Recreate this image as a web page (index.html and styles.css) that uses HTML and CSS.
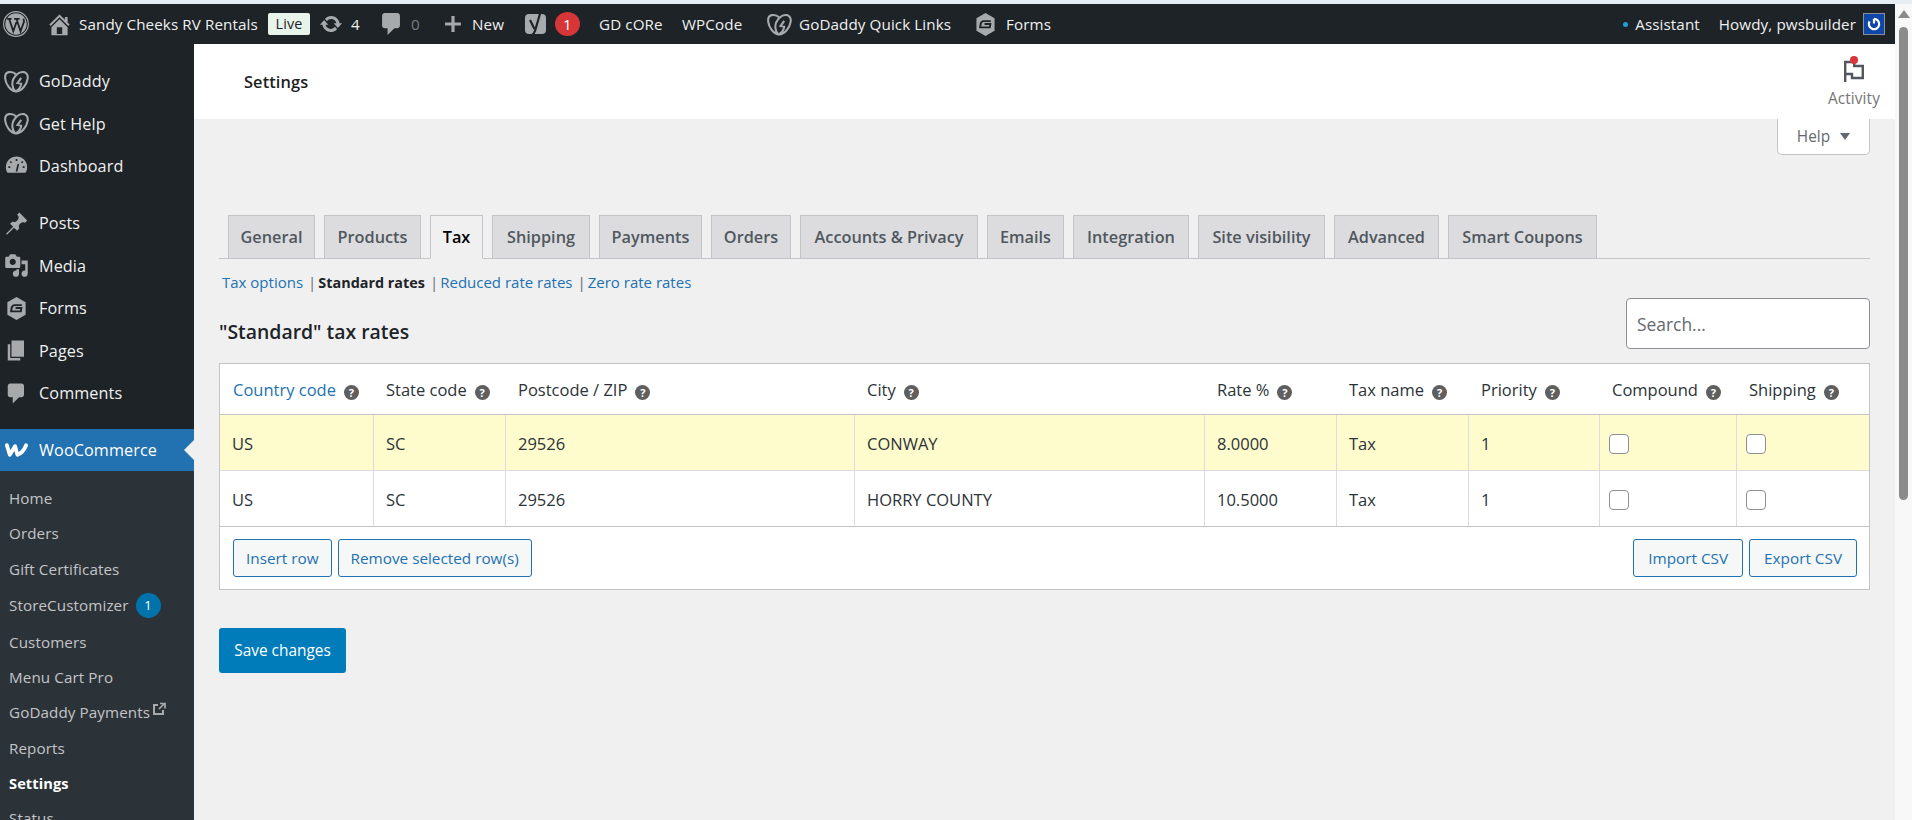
FILE: index.html
```html
<!DOCTYPE html>
<html lang="en">
<head>
<meta charset="utf-8">
<title>Settings</title>
<link rel="stylesheet" href="styles.css">
</head>
<body>
<div class="strip"></div>
<div class="window">
  <div class="app">
    <header class="adminbar">
      <nav class="ab-left">
        <svg class="ic-logo" viewBox="0 0 20 20"><circle cx="10" cy="10" r="9.500" fill="none" stroke="#a7aaad" stroke-width=".9"/><circle cx="10" cy="10" r="8.200" fill="#a7aaad"/><path d="M3.200 6h3.400M4.700 6l3.200 9.600 2.400-7M8.500 6h4.300M10.300 6l3.200 9.600 2.600-7.200c.4-1-.3-1.700-.5-2.400" fill="none" stroke="#1d2327" stroke-width="1.400"/></svg>
        <svg class="ic-home" viewBox="0 0 20 20"><path d="M16 8.500l1.530 1.530-1.060 1.060L10 4.620l-6.470 6.470-1.060-1.060L10 2.500l4 4v-2h2v4zm-6-2.460l6 5.990V18H4v-5.970zM12 17v-5H8v5h4z"/></svg>
        <span class="ab-t">Sandy Cheeks RV Rentals</span>
        <span class="live">Live</span>
        <svg class="ic-sync" viewBox="0 0 20 20"><path d="M10.200 3.280c3.530 0 6.430 2.610 6.920 6h2.080l-3.500 4-3.500-4h2.320c-.450-1.970-2.210-3.440-4.320-3.440-1.450 0-2.730.710-3.540 1.780L4.950 5.660C6.230 4.200 8.110 3.280 10.200 3.280zm-.400 13.440c-3.520 0-6.430-2.610-6.920-6H.800l3.500-4c1.170 1.330 2.330 2.670 3.500 4H5.480c.450 1.970 2.210 3.440 4.320 3.440 1.450 0 2.730-.710 3.540-1.780l1.710 1.950c-1.280 1.460-3.150 2.390-5.250 2.390z"/></svg>
        <span class="ab-t">4</span>
        <svg class="ic-comment" viewBox="3 2 13 16"><path d="M5 2h9c1.100 0 2 .900 2 2v7c0 1.100-.900 2-2 2h-2l-5 5v-5H5c-1.100 0-2-.900-2-2V4c0-1.100.900-2 2-2z"/></svg>
        <span class="ab-t dim">0</span>
        <svg class="ic-plus" viewBox="0 0 17 17"><path d="M7 1h3v6h6v3h-6v6H7v-6H1V7h6z"/></svg>
        <span class="ab-t">New</span>
        <svg class="ic-yoast" viewBox="0 0 22 26"><rect x="0" y="3" width="21" height="20" rx="4" fill="#a7aaad"/><path d="M5 9l4.500 9M15.500 1L10 20c-.6 2-2 3.500-4 5" fill="none" stroke="#1d2327" stroke-width="2.200"/></svg>
        <span class="bubble">1</span>
        <span class="ab-t">GD cORe</span>
        <span class="ab-t">WPCode</span>
        <svg class="ic-gd" viewBox="0 0 24 21"><path d="M12 4C10 2 7 1 4.500 1.500 1.800 2 .8 5 1.200 8 1.800 13 6 19.500 11 20c6 .5 11-7 11.700-12 .4-3-.6-5.500-3.200-6.500C17 1 14 2 12 4zM12 4C9.500 6.500 7.800 10 8 13.500c.1 2.500 1.500 5 3 6.500M16.500 7L13 12l3.500.5c-.3 3-2 5.500-4.500 7" fill="none" stroke="#a7aaad" stroke-width="2"/></svg>
        <span class="ab-t">GoDaddy Quick Links</span>
        <svg class="ic-forms" viewBox="0 0 22 24"><path d="M11 0l9.500 5.500v13L11 24l-9.500-5.500v-13z" fill="#a7aaad"/><path d="M16.500 8.500H9C7.500 8.500 6.500 9.500 6 11l-.6 4h10.100l.6-3.500H10" fill="none" stroke="#1d2327" stroke-width="2"/></svg>
        <span class="ab-t">Forms</span>
      </nav>
      <div class="ab-right">
        <span class="dot"></span>
        <span class="ab-t assistant">Assistant</span>
        <span class="ab-t howdy">Howdy, pwsbuilder</span>
        <span class="avatar"><svg viewBox="0 0 20 20"><path d="M10 3.500a6.500 6.500 0 1 1-5.600 3.200M10 3.500v6" fill="none" stroke="#fff" stroke-width="2.800"/></svg></span>
      </div>
    </header>
    <div class="body">
      <aside class="sidebar">
        <a class="mi"><svg class="mi-ic" viewBox="0 0 24 21"><path d="M12 4C10 2 7 1 4.500 1.500 1.800 2 .8 5 1.200 8 1.800 13 6 19.500 11 20c6 .5 11-7 11.700-12 .4-3-.6-5.500-3.200-6.500C17 1 14 2 12 4zM12 4C9.500 6.500 7.800 10 8 13.500c.1 2.500 1.500 5 3 6.500M16.500 7L13 12l3.500.5c-.3 3-2 5.500-4.500 7" fill="none" stroke="#a7aaad" stroke-width="2"/></svg>GoDaddy</a>
        <a class="mi"><svg class="mi-ic" viewBox="0 0 24 21"><path d="M12 4C10 2 7 1 4.500 1.500 1.800 2 .8 5 1.200 8 1.800 13 6 19.500 11 20c6 .5 11-7 11.700-12 .4-3-.6-5.500-3.200-6.500C17 1 14 2 12 4zM12 4C9.500 6.500 7.800 10 8 13.500c.1 2.500 1.500 5 3 6.500M16.500 7L13 12l3.500.5c-.3 3-2 5.500-4.500 7" fill="none" stroke="#a7aaad" stroke-width="2"/></svg>Get Help</a>
        <a class="mi"><svg class="mi-ic" viewBox="0 0 20 20"><path d="M10 2a8.500 8.500 0 0 0-8.500 8.500c0 1.800.5 3.400 1.400 4.500h14.200c.9-1.100 1.400-2.700 1.400-4.500A8.500 8.500 0 0 0 10 2z" fill="#a7aaad"/><path d="M10 4v1.500M5 6l1 1M3.500 10.500H5M15 6l-1 1M16.500 10.500H15M11.500 8l-1.500 6" fill="none" stroke="#1d2327" stroke-width="1.300"/></svg>Dashboard</a>
        <div class="sep"></div>
        <a class="mi"><svg class="mi-ic" viewBox="0 0 20 20"><path d="M10.440 3.020l1.820-1.820 6.360 6.350-1.830 1.820c-1.050-.680-2.480-.570-3.410.360l-.750.750c-.920.930-1.040 2.350-.350 3.410l-1.830 1.820-2.410-2.410-5.660 5.660-.710-.710 5.650-5.650-2.410-2.410 1.820-1.830c1.060.690 2.480.570 3.410-.350l.750-.750c.930-.930 1.040-2.360.360-3.410z"/></svg>Posts</a>
        <a class="mi"><svg class="mi-ic" viewBox="0 0 20 20"><path d="M13 11V4c0-.550-.450-1-1-1h-1.670L9 1H5L3.670 3H2c-.550 0-1 .450-1 1v7c0 .550.450 1 1 1h10c.550 0 1-.450 1-1zM7 4.500c1.380 0 2.500 1.120 2.500 2.500S8.380 9.500 7 9.500 4.500 8.380 4.500 7 5.620 4.500 7 4.500zM14 6h5v10.500c0 1.380-1.120 2.500-2.500 2.500S14 17.880 14 16.500s1.120-2.500 2.500-2.500c.170 0 .340.020.500.050V9h-3V6zm-4 8.050V13h2v3.500c0 1.380-1.120 2.500-2.500 2.500S7 17.880 7 16.500 8.120 14 9.500 14c.170 0 .340.020.500.050z"/></svg>Media</a>
        <a class="mi"><svg class="mi-ic" viewBox="-1 -1 24 26"><path d="M11 0l9.500 5.500v13L11 24l-9.500-5.500v-13z" fill="#a7aaad"/><path d="M16.500 8.500H9C7.500 8.500 6.500 9.500 6 11l-.6 4h10.100l.6-3.500H10" fill="none" stroke="#1d2327" stroke-width="2"/></svg>Forms</a>
        <a class="mi"><svg class="mi-ic" viewBox="0 0 20 20"><path d="M6 15V2h10v13H6zm-1 1h8v2H3V5h2v11z"/></svg>Pages</a>
        <a class="mi"><svg class="mi-ic" viewBox="0 0 20 20"><path d="M5 2h9c1.100 0 2 .900 2 2v7c0 1.100-.900 2-2 2h-2l-5 5v-5H5c-1.100 0-2-.900-2-2V4c0-1.100.900-2 2-2z"/></svg>Comments</a>
        <div class="sep"></div>
        <a class="mi current"><svg class="mi-ic woo" viewBox="0 0 26 16"><path d="M3 3l3 10 5.500-9 2.500 9c4-1.500 7-5 9-10" fill="none" stroke="#fff" stroke-width="4" stroke-linejoin="round" stroke-linecap="round"/></svg>WooCommerce</a>
        <div class="sub">
          <a class="si">Home</a>
          <a class="si">Orders</a>
          <a class="si">Gift Certificates</a>
          <a class="si tall">StoreCustomizer<span class="count">1</span></a>
          <a class="si">Customers</a>
          <a class="si">Menu Cart Pro</a>
          <a class="si">GoDaddy Payments<svg class="ext" viewBox="0 0 14 14"><path d="M6 3H2v9h9V8" fill="none" stroke="#a7aaad" stroke-width="2"/><path d="M7 7l5-5M8 1.500h5v5" fill="none" stroke="#a7aaad" stroke-width="1.700"/></svg></a>
          <a class="si">Reports</a>
          <a class="si on">Settings</a>
          <a class="si">Status</a>
        </div>
      </aside>
      <main class="main">
        <div class="pagehead">
          <h1 class="pagetitle">Settings</h1>
          <div class="activity">
            <span class="flagwrap"><svg viewBox="0 0 20 22" class="flag"><path d="M1.200 22V2h9v4h8.600v12H8v-4H1.200" fill="none" stroke="#50575e" stroke-width="2.400"/></svg><span class="reddot"></span></span>
            <span class="activity-t">Activity</span>
          </div>
        </div>
        <div class="content">
          <div class="helprow"><button class="help">Help <span class="tri"></span></button></div>
          <nav class="tabs">
            <a class="tab w1">General</a>
            <a class="tab w2">Products</a>
            <a class="tab w3 active">Tax</a>
            <a class="tab w4">Shipping</a>
            <a class="tab w5">Payments</a>
            <a class="tab w6">Orders</a>
            <a class="tab w7">Accounts &amp; Privacy</a>
            <a class="tab w8">Emails</a>
            <a class="tab w9">Integration</a>
            <a class="tab w10">Site visibility</a>
            <a class="tab w11">Advanced</a>
            <a class="tab w12">Smart Coupons</a>
          </nav>
          <ul class="subsub">
            <li><a>Tax options</a><span class="pipe">|</span></li>
            <li><b>Standard rates</b><span class="pipe">|</span></li>
            <li><a>Reduced rate rates</a><span class="pipe">|</span></li>
            <li><a>Zero rate rates</a></li>
          </ul>
          <div class="titlerow">
            <h2 class="rates">"Standard" tax rates</h2>
            <input class="search" type="text" placeholder="Search...">
          </div>
          <table class="rt">
            <colgroup>
              <col class="c1"><col class="c2"><col class="c3"><col class="c4"><col class="c5"><col class="c6"><col class="c7"><col class="c8"><col class="c9">
            </colgroup>
            <thead>
              <tr>
                <th><a>Country code</a><i class="q">?</i></th>
                <th>State code<i class="q">?</i></th>
                <th>Postcode / ZIP<i class="q">?</i></th>
                <th>City<i class="q">?</i></th>
                <th>Rate %<i class="q">?</i></th>
                <th>Tax name<i class="q">?</i></th>
                <th>Priority<i class="q">?</i></th>
                <th>Compound<i class="q">?</i></th>
                <th>Shipping<i class="q">?</i></th>
              </tr>
            </thead>
            <tbody>
              <tr class="hl">
                <td>US</td><td>SC</td><td>29526</td><td>CONWAY</td><td>8.0000</td><td>Tax</td><td>1</td>
                <td class="ck"><input type="checkbox" class="cb"></td><td class="ck"><input type="checkbox" class="cb"></td>
              </tr>
              <tr>
                <td>US</td><td>SC</td><td>29526</td><td>HORRY COUNTY</td><td>10.5000</td><td>Tax</td><td>1</td>
                <td class="ck"><input type="checkbox" class="cb"></td><td class="ck"><input type="checkbox" class="cb"></td>
              </tr>
            </tbody>
            <tfoot>
              <tr>
                <td colspan="9">
                  <div class="foot">
                    <button class="btn">Insert row</button>
                    <button class="btn">Remove selected row(s)</button>
                    <span class="spacer"></span>
                    <button class="btn csv">Import CSV</button>
                    <button class="btn csv">Export CSV</button>
                  </div>
                </td>
              </tr>
            </tfoot>
          </table>
          <button class="save">Save changes</button>
        </div>
      </main>
    </div>
  </div>
  <div class="scrollbar">
    <span class="sb-up"></span>
    <span class="sb-thumb"></span>
  </div>
</div>
</body>
</html>
```

FILE: styles.css
```css
* { box-sizing: border-box; }
html, body { margin: 0; height: 820px; overflow: hidden; }
body {
  font-family: "Open Sans", "Noto Sans", sans-serif;
  font-size: 15.2px;
  letter-spacing: .1px;
  color: #2c3338;
  background: #f0f0f1;
}
.strip { height: 4px; background: #e6eef3; }
.window { display: flex; height: 816px; }
.app { flex: 1; min-width: 0; }

/* admin bar */
.adminbar {
  height: 40px;
  background: #1d2327;
  color: #f0f0f1;
  display: flex;
  justify-content: space-between;
  align-items: center;
  padding-left: 3px;
  padding-right: 10px;
}
.ab-left {
  display: grid;
  grid-template-columns: 46px 30px 189px 52px 31px 31px 29px 33px 28px 53px 30px 44px 83px 85px 32px 176px 31px auto;
  align-items: center;
}
.ab-t { white-space: nowrap; line-height: 22px; }
.dim { color: #787c82; }
.adminbar svg { fill: #a7aaad; display: block; }
.ic-logo { width: 26px; height: 26px; }
.ic-home { width: 27px; height: 27px; margin-left: -3px; }
.ic-sync { width: 24px; height: 24px; margin-left: -1px; }
.ic-comment { width: 18px; height: 22px; }
.ic-plus { width: 18px; height: 18px; }
.ic-yoast { width: 22px; height: 26px; }
.ic-gd { width: 25px; height: 25px; }
.ic-forms { width: 21px; height: 23px; }
.live {
  justify-self: start;
  background: #e8f3ea;
  color: #1d2327;
  border-radius: 2px;
  height: 22px;
  width: 42px;
  font-size: 14.4px;
  line-height: 21px;
  text-align: center;
}
.bubble {
  width: 25px;
  height: 24px;
  border-radius: 50%;
  background: #d63638;
  color: #fff;
  text-align: center;
  line-height: 24px;
}
.ab-right { display: flex; align-items: center; }
.dot { width: 5px; height: 5px; border-radius: 50%; background: #1da1d6; margin-right: 7px; }
.assistant { margin-right: 19px; }
.howdy { margin-right: 7px; }
.avatar {
  width: 22px;
  height: 22px;
  background: #0f47a8;
  border: 1px solid #8a8f94;
  display: flex;
  align-items: center;
  justify-content: center;
}
.avatar svg { width: 16px; height: 16px; fill: none; }

.body { display: flex; height: 776px; }

/* sidebar */
.sidebar { width: 194px; flex: none; background: #1d2327; overflow: hidden; padding-top: 16px; }
.mi {
  display: flex;
  align-items: center;
  height: 42.6px;
  padding-left: 4px;
  color: #f0f0f1;
  position: relative;
  font-size: 16.2px;
}
.mi-ic { width: 25px; height: 25px; margin-right: 10px; fill: #a7aaad; flex: none; }
.woo { height: 18px; }
.sep { height: 14px; }
.current { background: #2271b1; color: #fff; }
.current::after {
  content: "";
  position: absolute;
  right: 0;
  top: 50%;
  margin-top: -10px;
  border: 10px solid transparent;
  border-right-color: #f0f0f1;
  border-left-width: 0;
}
.sub { background: #2c3338; padding-top: 9px; padding-bottom: 8px; }
.si {
  display: flex;
  align-items: center;
  height: 35.3px;
  padding-left: 9px;
  color: #c3c4c7;
  font-size: 15.2px;
}
.tall { height: 38px; }
.on { color: #fff; font-weight: 700; font-size: 14.6px; }
.count {
  width: 25px;
  height: 25px;
  margin-left: 7px;
  border-radius: 50%;
  background: #0073aa;
  color: #fff;
  font-size: 13px;
  text-align: center;
  line-height: 25px;
}
.ext { width: 14px; height: 14px; margin-left: 2px; margin-top: -6px; }

/* main */
.main { flex: 1; min-width: 0; }
.pagehead {
  height: 75px;
  background: #fff;
  display: flex;
  justify-content: space-between;
  align-items: flex-start;
  padding-left: 50px;
  padding-right: 15px;
}
.pagetitle { margin: 26px 0 0; font-size: 16.4px; line-height: 24px; font-weight: 600; color: #1e1e1e; }
.activity { display: flex; flex-direction: column; align-items: center; color: #757575; margin-top: 16px; }
.flagwrap { position: relative; width: 20px; height: 22px; display: block; margin-bottom: 7px; }
.flag { display: block; width: 20px; height: 22px; }
.reddot { position: absolute; left: 6px; top: -4px; width: 8px; height: 8px; border-radius: 50%; background: #d63638; }
.activity-t { font-size: 15.4px; line-height: 20px; }

.content { padding: 0 25px; }
.helprow { display: flex; justify-content: flex-end; height: 36px; }
.help {
  width: 93px;
  height: 36px;
  background: #fff;
  border: 1px solid #c3c4c7;
  border-top: 0;
  border-radius: 0 0 5px 5px;
  font: inherit;
  font-size: 15.4px;
  color: #646970;
}
.tri {
  display: inline-block;
  margin-left: 6px;
  vertical-align: 2px;
  border: 5px solid transparent;
  border-top: 7px solid #646970;
  border-bottom: 0;
}

.tabs {
  display: flex;
  gap: 9px;
  margin-top: 60px;
  padding-left: 9px;
  height: 44px;
  border-bottom: 1px solid #c3c4c7;
}
.tab {
  height: 44px;
  background: #dcdcde;
  border: 1px solid #c3c4c7;
  color: #50575e;
  font-weight: 600;
  font-size: 16.3px;
  letter-spacing: 0;
  display: flex;
  align-items: center;
  justify-content: center;
  white-space: nowrap;
}
.active { background: #f0f0f1; color: #000; border-bottom-color: #f0f0f1; }
.w1 { width: 87px; }
.w2 { width: 97px; }
.w3 { width: 53px; }
.w4 { width: 98px; }
.w5 { width: 103px; }
.w6 { width: 80px; }
.w7 { width: 178px; }
.w8 { width: 77px; }
.w9 { width: 116px; }
.w10 { width: 127px; }
.w11 { width: 105px; }
.w12 { width: 149px; }

.subsub {
  list-style: none;
  margin: 12px 0 0;
  padding: 0 0 0 3px;
  height: 22px;
  line-height: 22px;
  display: flex;
  white-space: nowrap;
  font-size: 15px;
  letter-spacing: 0;
}
.subsub a { color: #2271b1; }
.subsub b { color: #1d2327; font-weight: 700; font-size: 14.4px; }
.pipe { color: #646970; margin: 0 2px 0 5px; }

.titlerow { display: flex; justify-content: space-between; margin-top: 5px; }
.rates { margin: 21px 0 0; font-size: 19.4px; font-weight: 600; line-height: 26px; color: #1d2327; letter-spacing: 0; }
.search {
  width: 244px;
  height: 51px;
  border: 1px solid #8c8f94;
  border-radius: 4px;
  padding: 0 10px;
  font: inherit;
  font-size: 17.4px;
  background: #fff;
}
.search::placeholder { color: #646970; opacity: 1; }

.rt {
  width: 1651px;
  margin-top: 14px;
  border-collapse: separate;
  border-spacing: 0;
  table-layout: fixed;
  background: #fff;
  border: 1px solid #c3c4c7;
  font-size: 16.5px;
  letter-spacing: 0;
}
.c1 { width: 154px; }
.c2 { width: 132px; }
.c3 { width: 349px; }
.c4 { width: 350px; }
.c5 { width: 132px; }
.c6 { width: 132px; }
.c7 { width: 131px; }
.c8 { width: 137px; }
.rt th {
  height: 51px;
  text-align: left;
  font-weight: 400;
  padding: 0 0 0 12px;
  border-bottom: 1px solid #c3c4c7;
  white-space: nowrap;
}
.rt th:first-child { padding-left: 13px; }
.rt th a { color: #2271b1; }
.q {
  display: inline-block;
  width: 15px;
  height: 15px;
  margin-left: 8px;
  border-radius: 50%;
  background: #5f5f5f;
  color: #fff;
  font-style: normal;
  font-weight: 700;
  font-size: 11px;
  line-height: 15px;
  text-align: center;
  vertical-align: -1px;
}
.rt td { height: 56px; padding: 2px 0 0 12px; border-bottom: 1px solid #dcdcde; border-right: 1px solid #dcdcde; }
.rt td:last-child { border-right: 0; }
.rt tbody tr:last-child td { border-bottom-color: #c3c4c7; }
.hl td { background: #fefbcd; }
.rt td.ck { padding-left: 9px; }
.cb {
  appearance: none;
  display: block;
  width: 20px;
  height: 20px;
  margin: 0;
  background: #fff;
  border: 1px solid #8c8f94;
  border-radius: 4px;
}
.rt tfoot td { height: 62px; padding: 0 12px 0 13px; border: 0; }
.foot { display: flex; gap: 6px; }
.spacer { flex: 1; }
.btn {
  height: 38px;
  padding: 0 12px;
  background: #f6f7f7;
  border: 1px solid #2271b1;
  border-radius: 3px;
  color: #2271b1;
  font: inherit;
  font-size: 15.3px;
}
.csv { padding: 0 14px; }
.save {
  display: block;
  margin-top: 38px;
  width: 127px;
  height: 45px;
  background: #007cba;
  border: 0;
  border-radius: 3px;
  color: #fff;
  font: inherit;
  font-size: 15.4px;
}

/* scrollbar */
.scrollbar { width: 17px; flex: none; background: #f8f8f8; position: relative; }
.sb-up {
  display: block;
  margin: 6px auto 0;
  width: 0;
  border: 6px solid transparent;
  border-bottom: 8px solid #8b8b8b;
  border-top: 0;
}
.sb-thumb { display: block; width: 9px; height: 473px; margin: 9px 0 0 4px; background: #8b8b8b; border-radius: 5px; }
```
